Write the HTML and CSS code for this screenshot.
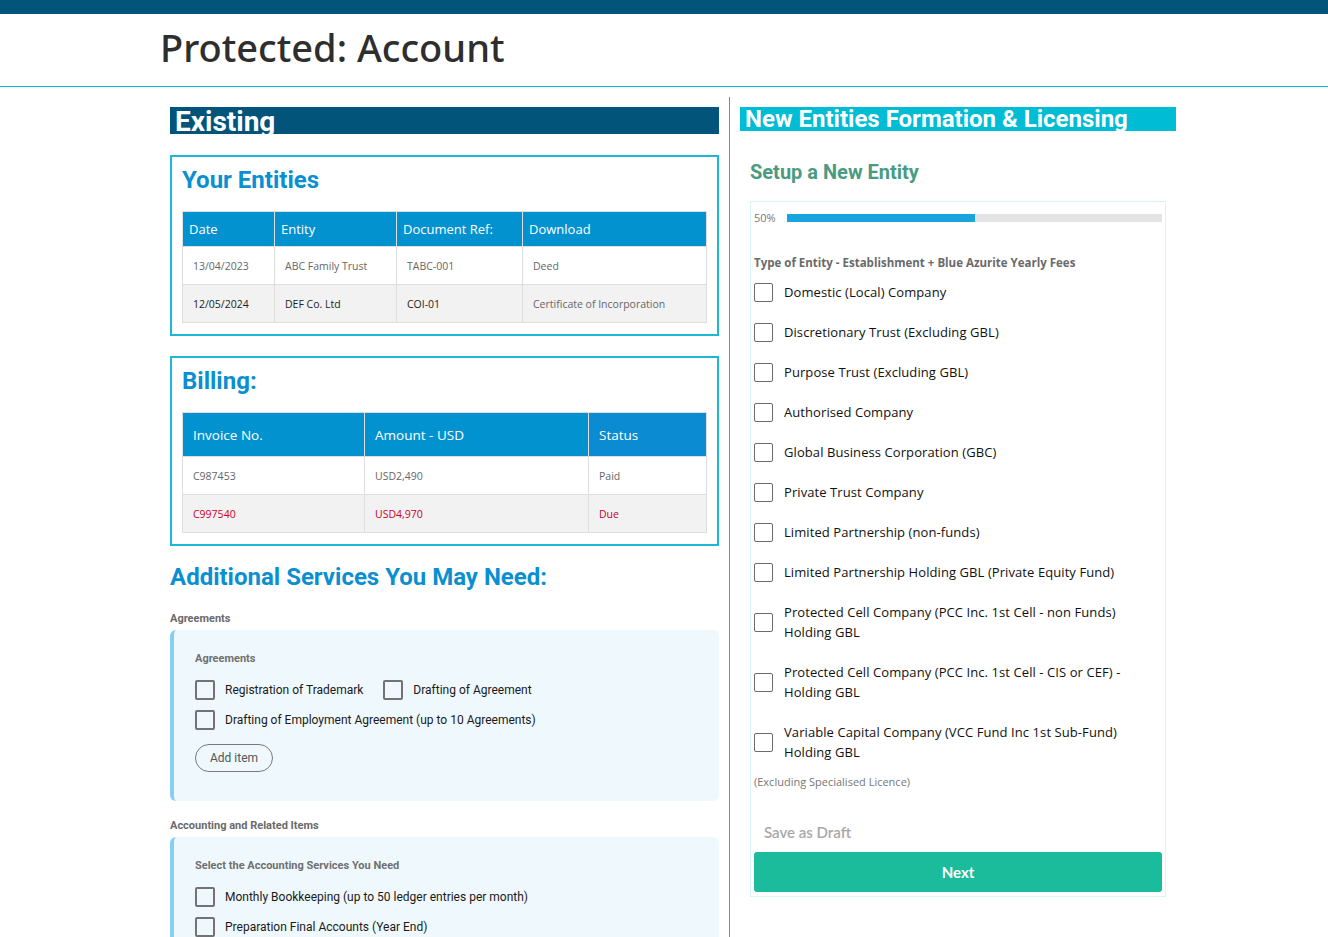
FILE: index.html
```html
<!DOCTYPE html>
<html lang="en">
<head>
<meta charset="utf-8">
<title>Protected: Account</title>
<link rel="stylesheet" href="styles.css">
</head>
<body>
<div class="topbar"></div>
<header class="page-header">
  <h1 class="page-title">Protected: Account</h1>
</header>
<main class="main">
  <section class="col-left">
    <h2 class="bar-title bar-dark">Existing</h2>

    <div class="box">
      <h3 class="box-title">Your Entities</h3>
      <table class="data-table entities">
        <colgroup><col class="c1"><col class="c2"><col class="c3"><col class="c4"></colgroup>
        <thead>
          <tr><th>Date</th><th>Entity</th><th>Document Ref:</th><th>Download</th></tr>
        </thead>
        <tbody>
          <tr><td>13/04/2023</td><td>ABC Family Trust</td><td>TABC-001</td><td>Deed</td></tr>
          <tr class="alt dark"><td>12/05/2024</td><td>DEF Co. Ltd</td><td>COI-01</td><td class="muted">Certificate of Incorporation</td></tr>
        </tbody>
      </table>
    </div>

    <div class="box box-billing">
      <h3 class="box-title">Billing:</h3>
      <table class="data-table billing">
        <colgroup><col class="b1"><col class="b2"><col class="b3"></colgroup>
        <thead>
          <tr><th>Invoice No.</th><th>Amount - USD</th><th class="status-h">Status</th></tr>
        </thead>
        <tbody>
          <tr><td>C987453</td><td>USD2,490</td><td>Paid</td></tr>
          <tr class="alt due"><td>C997540</td><td>USD4,970</td><td>Due</td></tr>
        </tbody>
      </table>
    </div>

    <h2 class="section-title">Additional Services You May Need:</h2>

    <div class="group-label">Agreements</div>
    <div class="panel">
      <div class="panel-label">Agreements</div>
      <div class="check-wrap">
        <label class="chk"><span class="box-sq"></span>Registration of Trademark</label>
        <label class="chk"><span class="box-sq"></span>Drafting of Agreement</label>
      </div>
      <div class="check-wrap">
        <label class="chk"><span class="box-sq"></span>Drafting of Employment Agreement (up to 10 Agreements)</label>
      </div>
      <button class="add-item" type="button">Add item</button>
    </div>

    <div class="group-label">Accounting and Related Items</div>
    <div class="panel">
      <div class="panel-label">Select the Accounting Services You Need</div>
      <div class="check-wrap">
        <label class="chk"><span class="box-sq"></span>Monthly Bookkeeping (up to 50 ledger entries per month)</label>
      </div>
      <div class="check-wrap">
        <label class="chk"><span class="box-sq"></span>Preparation Final Accounts (Year End)</label>
      </div>
    </div>
  </section>

  <section class="col-right">
    <h2 class="bar-title bar-cyan">New Entities Formation &amp; Licensing</h2>
    <div class="right-inner">
      <h3 class="setup-title">Setup a New Entity</h3>
      <form class="form-box">
        <div class="progress-row">
          <span class="progress-pct">50%</span>
          <div class="progress-track"><div class="progress-fill" style="width:50%"></div></div>
        </div>
        <div class="field-label">Type of Entity - Establishment + Blue Azurite Yearly Fees</div>
        <ul class="options">
          <li class="opt"><span class="sq"></span><span class="opt-text">Domestic (Local) Company</span></li>
          <li class="opt"><span class="sq"></span><span class="opt-text">Discretionary Trust (Excluding GBL)</span></li>
          <li class="opt"><span class="sq"></span><span class="opt-text">Purpose Trust (Excluding GBL)</span></li>
          <li class="opt"><span class="sq"></span><span class="opt-text">Authorised Company</span></li>
          <li class="opt"><span class="sq"></span><span class="opt-text">Global Business Corporation (GBC)</span></li>
          <li class="opt"><span class="sq"></span><span class="opt-text">Private Trust Company</span></li>
          <li class="opt"><span class="sq"></span><span class="opt-text">Limited Partnership (non-funds)</span></li>
          <li class="opt"><span class="sq"></span><span class="opt-text">Limited Partnership Holding GBL (Private Equity Fund)</span></li>
          <li class="opt"><span class="sq"></span><span class="opt-text">Protected Cell Company (PCC Inc. 1st Cell - non Funds)<br>Holding GBL</span></li>
          <li class="opt"><span class="sq"></span><span class="opt-text">Protected Cell Company (PCC Inc. 1st Cell - CIS or CEF) -<br>Holding GBL</span></li>
          <li class="opt"><span class="sq"></span><span class="opt-text">Variable Capital Company (VCC Fund Inc 1st Sub-Fund)<br>Holding GBL</span></li>
        </ul>
        <div class="note">(Excluding Specialised Licence)</div>
        <div class="draft">Save as Draft</div>
        <button class="next-btn" type="button">Next</button>
      </form>
    </div>
  </section>
</main>
</body>
</html>
```
FILE: styles.css
```css
* { box-sizing: border-box; }
html, body { margin: 0; padding: 0; background: #fff; }
body { font-family: "Open Sans", "Noto Sans", sans-serif; color: #222; }

.topbar { height: 14px; background: #02547a; }

.page-header { border-bottom: 1px solid #00bcd4; height: 73px; padding-left: 160px; }
.page-title {
  margin: 0;
  padding-top: 9px;
  font-family: "Noto Sans", "Open Sans", sans-serif;
  font-weight: 500;
  font-size: 38px;
  line-height: 48px;
  color: #2e2e2e;
}

.main { display: flex; padding-left: 170px; margin-top: 10px; align-items: flex-start; }

.col-left { width: 549px; margin-right: 10px; padding-top: 10px; }
.col-right { width: 447px; border-left: 1px solid #00bcd4; padding-left: 10px; padding-top: 10px; min-height: 840px; }

.bar-title {
  margin: 0;
  font-family: Roboto, sans-serif;
  font-weight: 700;
  color: #fff;
  padding-left: 5px;
  white-space: nowrap;
}
.bar-dark { background: #02547a; height: 27px; font-size: 28px; line-height: 29px; }
.bar-cyan { background: #00bcd4; width: 436px; height: 24px; font-size: 24px; line-height: 24px; }

.box {
  margin-top: 21px;
  border: 2px solid #1cb9d5;
  padding: 8px 11px 11px 10px;
}
.box-billing { margin-top: 20px; }
.box-title {
  margin: 0 0 16px;
  font-family: Roboto, sans-serif;
  font-weight: 700;
  font-size: 24px;
  line-height: 30px;
  color: #0a8fd1;
}

.data-table { width: 524px; border-collapse: collapse; table-layout: fixed; font-family: "Open Sans", sans-serif; }
.data-table th, .data-table td { border: 1px solid #dedede; text-align: left; }
.data-table th {
  background: #0392d0;
  color: #fff;
  font-weight: 400;
  font-size: 13px;
  padding: 0 6px;
  white-space: nowrap;
}
.data-table td { font-size: 10.5px; color: #666; padding: 0 10px; height: 38px; white-space: nowrap; }
.data-table tr.alt td { background: #f2f2f2; }
.entities th { height: 35px; }
.entities .c1 { width: 92px; }
.entities .c2 { width: 122px; }
.entities .c3 { width: 126px; }
.entities .c4 { width: 184px; }
.entities tr.dark td { color: #222; }
.entities tr.dark td.muted { color: #666; }
.billing th { height: 44px; padding: 0 10px; font-size: 13.5px; }
.billing .status-h { background: #0b8bd2; }
.billing .b1 { width: 182px; }
.billing .b2 { width: 224px; }
.billing .b3 { width: 118px; }
.billing tr.due td { color: #c8001e; }

.section-title {
  margin: 16px 0 20px;
  font-family: Roboto, sans-serif;
  font-weight: 700;
  font-size: 24px;
  line-height: 30px;
  color: #0a8fd1;
}

.group-label {
  font-family: Roboto, sans-serif;
  font-weight: 700;
  font-size: 11px;
  line-height: 14px;
  color: #6a6a6a;
  margin-bottom: 4px;
}
.panel {
  background: #eff8fd;
  border-left: 4px solid #85d0f0;
  border-radius: 6px;
  padding: 22px 20px 29px 21px;
  margin-bottom: 18px;
}
.panel-label {
  font-family: Roboto, sans-serif;
  font-weight: 700;
  font-size: 11px;
  line-height: 14px;
  color: #707070;
  margin-bottom: 14px;
}
.check-wrap { display: flex; gap: 20px; margin-bottom: 10px; }
.chk {
  display: flex;
  align-items: center;
  gap: 10px;
  font-family: Roboto, sans-serif;
  font-size: 12px;
  line-height: 20px;
  color: #1a1a1a;
}
.box-sq {
  width: 20px; height: 20px;
  border: 2px solid #737373;
  border-radius: 2px;
  background: transparent;
  flex: none;
}
.add-item {
  margin-top: 4px;
  height: 28px;
  padding: 0 14px;
  border: 1px solid #7a7a7a;
  border-radius: 14px;
  background: transparent;
  font-family: Roboto, sans-serif;
  font-size: 12px;
  color: #555;
}

.right-inner { padding: 0 10px; }
.setup-title {
  margin: 29px 0 17px;
  font-family: Roboto, sans-serif;
  font-weight: 700;
  font-size: 20px;
  line-height: 24px;
  color: #4a9b80;
}
.form-box {
  border: 1px solid #dcf2fb;
  padding: 9px 3px 4px 3px;
  margin: 0;
}
.progress-row { display: flex; align-items: center; gap: 11px; height: 14px; }
.progress-pct { font-size: 11px; color: #777; line-height: 14px; width: 22px; }
.progress-track { flex: 1; height: 8px; background: #e4e4e4; }
.progress-fill { height: 8px; background: #19a4de; }

.field-label {
  margin-top: 31px;
  font-size: 11.5px;
  font-weight: 700;
  line-height: 14px;
  color: #6a6a6a;
}
.options { list-style: none; margin: 12px 0 0; padding: 0; }
.opt { display: flex; align-items: center; gap: 11px; margin-bottom: 20px; }
.sq {
  width: 19px; height: 19px;
  border: 1px solid #6b6b6b;
  border-radius: 2px;
  flex: none;
}
.opt-text { font-size: 13px; letter-spacing: 0.08px; line-height: 20px; color: #111; }
.note { margin-top: -7px; font-size: 11px; line-height: 14px; color: #777; }
.draft {
  margin-top: 33px;
  padding-left: 10px;
  font-family: Lato, sans-serif;
  font-size: 15px;
  font-weight: 600;
  line-height: 20px;
  color: #a8a8a8;
}
.next-btn {
  display: block;
  width: 100%;
  margin-top: 10px;
  height: 40px;
  border: none;
  border-radius: 3px;
  background: #1abc9c;
  color: #fff;
  font-family: Lato, sans-serif;
  font-weight: 700;
  font-size: 15px;
}
```
